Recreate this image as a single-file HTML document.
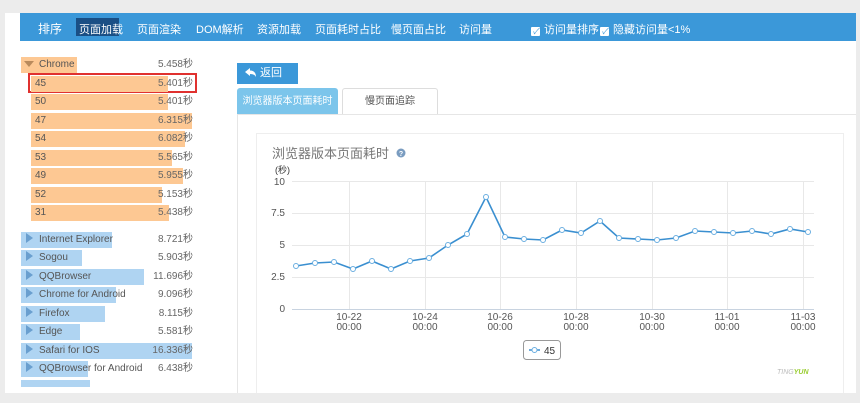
<!DOCTYPE html>
<html><head><meta charset="utf-8">
<style>
*{margin:0;padding:0;box-sizing:border-box}
body{width:860px;height:403px;background:#ececec;position:relative;overflow:hidden;font-family:"Liberation Sans","Noto Sans CJK SC",sans-serif;}
.a{position:absolute}
#panel{left:5px;top:13px;width:851px;height:380px;background:#fff}
#nav{left:20px;top:13px;width:836px;height:28px;background:#3b98d9;color:#fff;font-size:11px}
#nav span{position:absolute;top:8px;white-space:nowrap}
.cb{display:inline-block;width:9px;height:9px;background:#fff;border-radius:1px;vertical-align:-1px;margin-right:4px;color:#3b98d9;font-size:8px;line-height:9px;text-align:center}
.row{position:absolute;height:16px;font-size:10px;color:#555;line-height:16px}
.bar{position:absolute;height:16px}
.val{position:absolute;right:0;font-size:10px;color:#666;line-height:16px;text-align:right;width:60px}
.o{background:#fdc893}
.b{background:#afd4f2}
.tri{display:inline-block;width:0;height:0;border-top:5px solid transparent;border-bottom:5px solid transparent;border-left:7px solid #6a9fcf;margin:0 6px 0 5px;vertical-align:-1px}
</style></head><body>
<div id="panel" class="a"></div>
<div id="nav" class="a">
<span style="left:18px;top:7px;font-size:12px">排序</span>
<span style="left:56px;top:5px;width:43px;height:18px;background:#1a4f85"></span>
<span style="left:59px">页面加载</span>
<span style="left:117px">页面渲染</span>
<span style="left:176px">DOM解析</span>
<span style="left:237px">资源加载</span>
<span style="left:295px">页面耗时占比</span>
<span style="left:371px">慢页面占比</span>
<span style="left:439px">访问量</span>
<span style="left:511px"><i class="cb">✓</i>访问量排序</span>
<span style="left:580px"><i class="cb">✓</i>隐藏访问量&lt;1%</span>
</div>

<!-- left list -->
<div class="a" style="left:21px;top:57px;width:172px;height:330px">
 <div class="bar o" style="left:0;top:0;width:56px"></div>
 <div class="row" style="left:0;top:0;width:172px"><span style="display:inline-block;width:0;height:0;border-left:5px solid transparent;border-right:5px solid transparent;border-top:6px solid #b98a5c;margin:0 5px 0 3px"></span>Chrome</div>
 <div class="val" style="top:0">5.458秒</div>
</div>
<div class="a" style="left:28px;top:73px;width:169px;height:20px;border:2px solid #e0312f"></div>
<div class="a" style="left:21px;top:57px;width:172px;height:330px;overflow:hidden">
 <div class="bar o" style="left:10px;top:19px;width:137px"></div><div class="row" style="left:14px;top:19px">45</div><div class="val" style="top:19px">5.401秒</div>
 <div class="bar o" style="left:10px;top:37px;width:137px"></div><div class="row" style="left:14px;top:37px">50</div><div class="val" style="top:37px">5.401秒</div>
 <div class="bar o" style="left:10px;top:56px;width:161px"></div><div class="row" style="left:14px;top:56px">47</div><div class="val" style="top:56px">6.315秒</div>
 <div class="bar o" style="left:10px;top:74px;width:154px"></div><div class="row" style="left:14px;top:74px">54</div><div class="val" style="top:74px">6.082秒</div>
 <div class="bar o" style="left:10px;top:93px;width:141px"></div><div class="row" style="left:14px;top:93px">53</div><div class="val" style="top:93px">5.565秒</div>
 <div class="bar o" style="left:10px;top:111px;width:152px"></div><div class="row" style="left:14px;top:111px">49</div><div class="val" style="top:111px">5.955秒</div>
 <div class="bar o" style="left:10px;top:130px;width:131px"></div><div class="row" style="left:14px;top:130px">52</div><div class="val" style="top:130px">5.153秒</div>
 <div class="bar o" style="left:10px;top:148px;width:138px"></div><div class="row" style="left:14px;top:148px">31</div><div class="val" style="top:148px">5.438秒</div>

 <div class="bar b" style="left:0;top:175px;width:91px"></div><div class="row" style="left:0;top:175px"><i class="tri"></i>Internet Explorer</div><div class="val" style="top:175px">8.721秒</div>
 <div class="bar b" style="left:0;top:193px;width:61px"></div><div class="row" style="left:0;top:193px"><i class="tri"></i>Sogou</div><div class="val" style="top:193px">5.903秒</div>
 <div class="bar b" style="left:0;top:212px;width:123px"></div><div class="row" style="left:0;top:212px"><i class="tri"></i>QQBrowser</div><div class="val" style="top:212px">11.696秒</div>
 <div class="bar b" style="left:0;top:230px;width:95px"></div><div class="row" style="left:0;top:230px"><i class="tri"></i>Chrome for Android</div><div class="val" style="top:230px">9.096秒</div>
 <div class="bar b" style="left:0;top:249px;width:84px"></div><div class="row" style="left:0;top:249px"><i class="tri"></i>Firefox</div><div class="val" style="top:249px">8.115秒</div>
 <div class="bar b" style="left:0;top:267px;width:59px"></div><div class="row" style="left:0;top:267px"><i class="tri"></i>Edge</div><div class="val" style="top:267px">5.581秒</div>
 <div class="bar b" style="left:0;top:286px;width:171px"></div><div class="row" style="left:0;top:286px"><i class="tri"></i>Safari for IOS</div><div class="val" style="top:286px">16.336秒</div>
 <div class="bar b" style="left:0;top:304px;width:67px"></div><div class="row" style="left:0;top:304px;white-space:nowrap"><i class="tri"></i>QQBrowser for Android</div><div class="val" style="top:304px">6.438秒</div>
 <div class="bar b" style="left:0;top:323px;width:69px"></div>
</div>

<!-- right -->
<div class="a" style="left:237px;top:63px;width:61px;height:21px;background:#3b98d9;color:#fff;font-size:11px;line-height:21px;padding-left:8px">
<svg width="11" height="9" style="vertical-align:-1px;margin-right:4px" viewBox="0 0 11 9"><path d="M0 4 L5 0 L5 2.5 C9 2.5 11 5 11 9 C9.5 6.5 8 6 5 6 L5 8 Z" fill="#fff"/></svg>返回</div>
<div class="a" style="left:237px;top:88px;width:101px;height:27px;background:#7cc5eb;border-radius:3px 3px 0 0;color:#fff;font-size:10px;line-height:27px;text-align:center">浏览器版本页面耗时</div>
<div class="a" style="left:342px;top:88px;width:96px;height:27px;border:1px solid #ddd;border-bottom:none;border-radius:3px 3px 0 0;color:#555;font-size:10px;line-height:26px;text-align:center;background:#fff">慢页面追踪</div>
<div class="a" style="left:237px;top:114px;width:619px;height:279px;border-top:1px solid #e6e6e6;border-left:1px solid #e6e6e6"></div>
<div class="a" style="left:256px;top:133px;width:588px;height:260px;border:1px solid #eee;border-bottom:none"></div>

<svg class="a" style="left:0;top:0" width="860" height="403">
<text x="272" y="158" font-size="13" fill="#777" font-family="Liberation Sans,Noto Sans CJK SC,sans-serif">浏览器版本页面耗时</text>
<circle cx="401" cy="153" r="4.5" fill="#7a9cc0"/><text x="401" y="156" font-size="7" fill="#fff" text-anchor="middle" font-weight="bold" font-family="Liberation Sans,sans-serif">?</text>
<text x="275" y="173" font-size="9" fill="#333" font-family="Liberation Sans,Noto Sans CJK SC,sans-serif">(秒)</text>
<g stroke="#e8e8e8" stroke-width="1">
<line x1="292" y1="181.5" x2="814" y2="181.5"/><line x1="292" y1="213.5" x2="814" y2="213.5"/><line x1="292" y1="245.5" x2="814" y2="245.5"/><line x1="292" y1="277.5" x2="814" y2="277.5"/>
<line x1="349.5" y1="181" x2="349.5" y2="310"/><line x1="425.5" y1="181" x2="425.5" y2="310"/><line x1="500.5" y1="181" x2="500.5" y2="310"/><line x1="576.5" y1="181" x2="576.5" y2="310"/><line x1="652.5" y1="181" x2="652.5" y2="310"/><line x1="727.5" y1="181" x2="727.5" y2="310"/><line x1="803.5" y1="181" x2="803.5" y2="310"/>
</g>
<line x1="292" y1="309.5" x2="814" y2="309.5" stroke="#c8d3e0"/>
<g font-size="10" fill="#555" text-anchor="end" font-family="Liberation Sans,sans-serif">
<text x="285" y="185">10</text><text x="285" y="216">7.5</text><text x="285" y="248">5</text><text x="285" y="280">2.5</text><text x="285" y="312">0</text>
</g>
<g font-size="10" fill="#555" text-anchor="middle" font-family="Liberation Sans,sans-serif">
<text x="349" y="320">10-22</text><text x="349" y="330">00:00</text>
<text x="425" y="320">10-24</text><text x="425" y="330">00:00</text>
<text x="500" y="320">10-26</text><text x="500" y="330">00:00</text>
<text x="576" y="320">10-28</text><text x="576" y="330">00:00</text>
<text x="652" y="320">10-30</text><text x="652" y="330">00:00</text>
<text x="727" y="320">11-01</text><text x="727" y="330">00:00</text>
<text x="803" y="320">11-03</text><text x="803" y="330">00:00</text>
</g>
<polyline fill="none" stroke="#3a8fd0" stroke-width="1.6" points="296,266 315,263 334,262 353,269 372,261 391,269 410,261 429,258 448,245 467,234 486,197 505,237 524,239 543,240 562,230 581,233 600,221 619,238 638,239 657,240 676,238 695,231 714,232 733,233 752,231 771,234 790,229 808,232"/>
<g fill="#fff" stroke="#6aaee0" stroke-width="1">
<circle cx="296" cy="266" r="2.5"/><circle cx="315" cy="263" r="2.5"/><circle cx="334" cy="262" r="2.5"/><circle cx="353" cy="269" r="2.5"/><circle cx="372" cy="261" r="2.5"/><circle cx="391" cy="269" r="2.5"/><circle cx="410" cy="261" r="2.5"/><circle cx="429" cy="258" r="2.5"/><circle cx="448" cy="245" r="2.5"/><circle cx="467" cy="234" r="2.5"/><circle cx="486" cy="197" r="2.5"/><circle cx="505" cy="237" r="2.5"/><circle cx="524" cy="239" r="2.5"/><circle cx="543" cy="240" r="2.5"/><circle cx="562" cy="230" r="2.5"/><circle cx="581" cy="233" r="2.5"/><circle cx="600" cy="221" r="2.5"/><circle cx="619" cy="238" r="2.5"/><circle cx="638" cy="239" r="2.5"/><circle cx="657" cy="240" r="2.5"/><circle cx="676" cy="238" r="2.5"/><circle cx="695" cy="231" r="2.5"/><circle cx="714" cy="232" r="2.5"/><circle cx="733" cy="233" r="2.5"/><circle cx="752" cy="231" r="2.5"/><circle cx="771" cy="234" r="2.5"/><circle cx="790" cy="229" r="2.5"/><circle cx="808" cy="232" r="2.5"/>
</g>
<rect x="523.5" y="340.5" width="37" height="19" rx="3" fill="#fff" stroke="#999"/>
<line x1="529" y1="350" x2="540" y2="350" stroke="#3a8fd0" stroke-width="1.5"/><circle cx="534.5" cy="350" r="2.5" fill="#fff" stroke="#6aaee0"/>
<text x="544" y="354" font-size="10" fill="#333" font-family="Liberation Sans,sans-serif">45</text>
<text x="777" y="374" font-size="7" fill="#bbb" font-style="italic" font-family="Liberation Sans,sans-serif">TING<tspan fill="#9acd32" font-weight="bold">YUN</tspan></text>
</svg>
</body></html>
